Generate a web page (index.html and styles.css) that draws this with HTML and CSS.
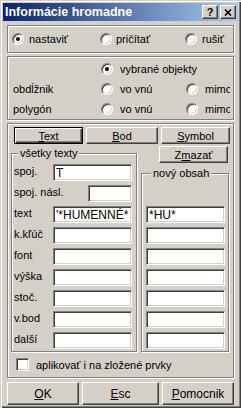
FILE: index.html
```html
<!DOCTYPE html>
<html>
<head>
  <meta charset="UTF-8">
  <meta name="viewport" content="width=device-width, initial-scale=1.0">
  <title>Informácie hromadne</title>
  <link rel="stylesheet" href="styles.css">
</head>
<body>
  <div class="window">
    <div class="caption">
      <span class="caption-title">Informácie hromadne</span>
      <span class="caption-btn">?</span>
      <span class="caption-btn close">
        <svg width="8" height="7" viewBox="0 0 8 7"><path d="M1 0.5l6 6M7 0.5l-6 6" stroke="#000" stroke-width="1.6"/></svg>
      </span>
    </div>

    <div class="client">
      <div class="group mode">
        <div class="opt"><span class="radio on"></span>nastaviť</div>
        <div class="opt tight"><span class="radio"></span>pričítať</div>
        <div class="opt"><span class="radio"></span>rušiť</div>
      </div>

      <div class="group select">
        <span></span>
        <div class="opt wide"><span class="radio on"></span>vybrané objekty</div>
        <span></span>

        <span class="cap">obdĺžnik</span>
        <div class="opt wide"><span class="radio"></span>vo vnú</div>
        <div class="opt wide"><span class="radio"></span><span class="clip">mimo</span></div>

        <span class="cap">polygón</span>
        <div class="opt wide"><span class="radio"></span>vo vnú</div>
        <div class="opt wide"><span class="radio"></span><span class="clip">mimo</span></div>
      </div>

      <div class="group main">
        <div class="tools">
          <div class="btn default w-text"><span><u>T</u>ext</span></div>
          <div class="btn w-bod"><span><u>B</u>od</span></div>
          <div class="btn w-sym"><span><u>S</u>ymbol</span></div>
        </div>

        <div class="body">
          <fieldset class="fs left">
            <legend>všetky texty</legend>
            <div class="rows">
              <div class="row"><span class="lbl">spoj.</span><input class="field" value="T"></div>
              <div class="row"><span class="lbl">spoj. násl.</span><input class="field short" value=""></div>
              <div class="row"><span class="lbl">text</span><input class="field" value="'*HUMENNÉ*"></div>
              <div class="row"><span class="lbl">k.kľúč</span><input class="field" value=""></div>
              <div class="row"><span class="lbl">font</span><input class="field" value=""></div>
              <div class="row"><span class="lbl">výška</span><input class="field" value=""></div>
              <div class="row"><span class="lbl">stoč.</span><input class="field" value=""></div>
              <div class="row"><span class="lbl">v.bod</span><input class="field" value=""></div>
              <div class="row"><span class="lbl">další</span><input class="field" value=""></div>
            </div>
          </fieldset>

          <div class="side">
            <div class="btn w-sym erase"><span>Z<u>m</u>azať</span></div>
            <fieldset class="fs right">
              <legend>nový obsah</legend>
              <div class="rows push">
                <div class="row"><input class="field" value="*HU*"></div>
                <div class="row"><input class="field" value=""></div>
                <div class="row"><input class="field" value=""></div>
                <div class="row"><input class="field" value=""></div>
                <div class="row"><input class="field" value=""></div>
                <div class="row"><input class="field" value=""></div>
                <div class="row"><input class="field" value=""></div>
              </div>
            </fieldset>
          </div>
        </div>

        <div class="check-row"><span class="check"></span>aplikovať i na zložené prvky</div>
      </div>

      <div class="footer">
        <div class="btn w-ok"><span><u>O</u>K</span></div>
        <div class="btn w-esc"><span><u>E</u>sc</span></div>
        <div class="btn w-ok"><span><u>P</u>omocnik</span></div>
      </div>
    </div>
  </div>
</body>
</html>
```

FILE: styles.css
```css
body {
  margin: 0;
  background: #fff;
  font-family: "Liberation Sans", Arial, sans-serif;
  font-size: 11px;
  color: #000;
}
.window {
  width: 241px;
  height: 408px;
  box-sizing: border-box;
  padding: 3px;
  background: #d4d0c8;
  box-shadow: inset 1px 1px #d4d0c8, inset 2px 2px #fff, inset -1px -1px #404040, inset -2px -2px #808080;
  display: flex;
  flex-direction: column;
}
.caption {
  height: 18px;
  display: flex;
  align-items: center;
  padding: 0 2px 0 2px;
  background: linear-gradient(to right, #0a246a, #a6caf0);
  color: #fff;
  font-weight: bold;
  font-size: 12.5px;
}
.caption-title {
  flex: 1;
}
.caption-btn {
  width: 16px;
  height: 14px;
  box-sizing: border-box;
  background: #d4d0c8;
  border: 1px solid;
  border-color: #fff #404040 #404040 #fff;
  box-shadow: inset -1px -1px #808080;
  display: flex;
  align-items: center;
  justify-content: center;
  color: #000;
  font-size: 11px;
  font-weight: bold;
}
.caption-btn.close {
  margin-left: 2px;
}
.client {
  flex: 1;
  padding: 4px 4px 0;
  display: flex;
  flex-direction: column;
  gap: 3px;
}
.group {
  box-sizing: border-box;
  border: 1px solid #808080;
  box-shadow: inset 1px 1px #fff, 1px 1px #fff;
}

/* radios */
.opt {
  display: flex;
  align-items: center;
  gap: 5px;
  white-space: nowrap;
}
.opt.tight {
  gap: 4px;
}
.opt.wide {
  gap: 7px;
}
.radio {
  position: relative;
  width: 12px;
  height: 12px;
  box-sizing: border-box;
  flex: none;
  border-radius: 50%;
  background: #fff;
  border: 1px solid;
  border-color: #808080 #fff #fff #808080;
  box-shadow: inset 1px 1px #404040, inset -1px -1px #d4d0c8;
}
.radio.on::after {
  content: "";
  position: absolute;
  left: 3px;
  top: 3px;
  width: 4px;
  height: 4px;
  border-radius: 50%;
  background: #000;
}
.clip {
  width: 25px;
  overflow: hidden;
}
.mode {
  height: 28px;
  display: grid;
  grid-template-columns: 88px 85px 1fr;
  align-items: center;
  padding-left: 4px;
}
.select {
  height: 64px;
  display: grid;
  grid-template-columns: 88px 85px 1fr;
  grid-auto-rows: 20px;
  align-items: center;
  padding: 2px 0 0 5px;
}

/* main block */
.main {
  height: 255px;
  padding-top: 3px;
}
.tools {
  display: flex;
  gap: 3px;
  padding-left: 6px;
}
.btn {
  height: 17px;
  box-sizing: border-box;
  border: 1px solid;
  border-color: #fff #404040 #404040 #fff;
  box-shadow: inset -1px -1px #808080;
  background: #d4d0c8;
  display: flex;
  align-items: center;
  justify-content: center;
}
.btn.default {
  border-color: #000;
  box-shadow: inset 1px 1px #fff, inset -1px -1px #404040, inset -2px -2px #808080;
}
.w-text { width: 69px; }
.w-bod { width: 72px; }
.w-sym { width: 69px; }
.body {
  display: flex;
  margin-top: 2px;
  padding-left: 3px;
}
.fs {
  margin: 0;
  min-width: 0;
  box-sizing: border-box;
  border: 1px solid #808080;
  box-shadow: inset 1px 1px #fff, 1px 1px #fff;
  display: flex;
  flex-direction: column;
}
.fs legend {
  line-height: 15px;
  padding: 0 2px;
  background: #d4d0c8;
}
.fs.left {
  width: 126px;
  padding: 3px 4px 2px 2px;
}
.fs.left legend {
  margin-left: 4px;
}
.side {
  width: 88px;
  margin-left: 4px;
  display: flex;
  flex-direction: column;
}
.erase {
  margin-left: 18px;
}
.fs.right {
  flex: 1;
  margin-top: 3px;
  padding: 3px 3px 2px 4px;
}
.fs.right legend {
  margin-left: 5px;
}
.rows {
  display: flex;
  flex-direction: column;
  gap: 4px;
}
.rows.push {
  margin-top: auto;
}
.row {
  height: 17px;
  display: flex;
  align-items: flex-start;
}
.lbl {
  line-height: 13px;
  margin-top: 1px;
  white-space: nowrap;
}
.field {
  margin: 0 0 0 auto;
  width: 79px;
  height: 17px;
  box-sizing: border-box;
  padding: 0 2px;
  font: inherit;
  font-size: 12px;
  color: #000;
  background: #fff;
  border: 1px solid;
  border-color: #808080 #fff #fff #808080;
  box-shadow: inset 1px 1px #404040, inset -1px -1px #d4d0c8;
  outline: none;
}
.field.short {
  width: 44px;
}
.check-row {
  display: flex;
  align-items: center;
  gap: 7px;
  margin-top: 6px;
  padding-left: 8px;
}
.check {
  width: 13px;
  height: 13px;
  box-sizing: border-box;
  background: #fff;
  border: 1px solid;
  border-color: #808080 #fff #fff #808080;
  box-shadow: inset 1px 1px #404040, inset -1px -1px #d4d0c8;
}

/* footer */
.footer {
  display: flex;
  gap: 3px;
  margin-top: 1px;
}
.footer .btn {
  height: 23px;
  font-size: 12px;
}
.w-ok { width: 72px; }
.w-esc { width: 77px; }
```
